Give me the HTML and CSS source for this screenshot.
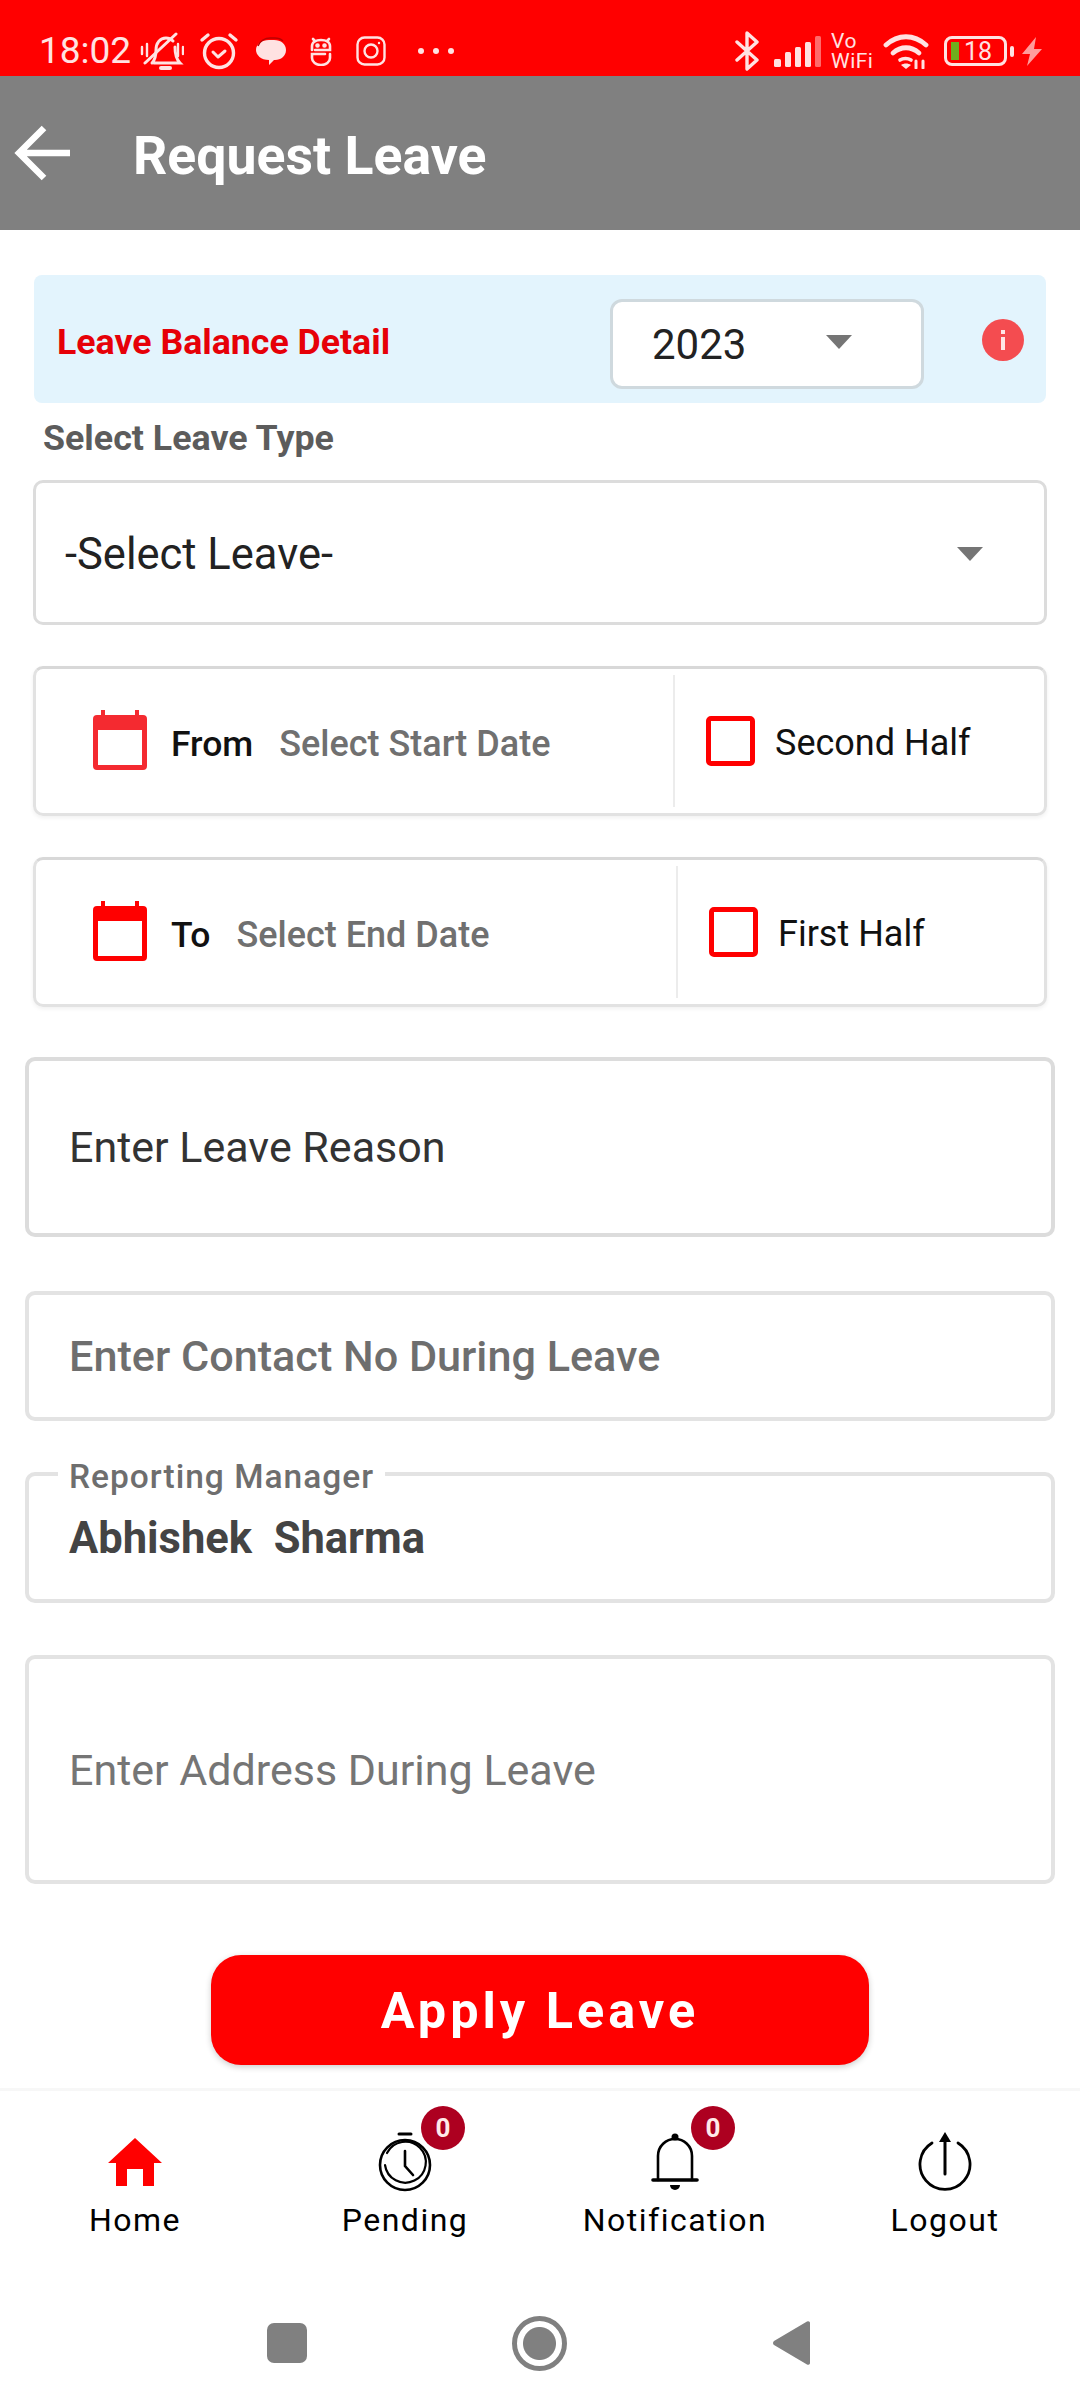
FILE: index.html
```html
<!DOCTYPE html>
<html>
    <head>
        <title>Request Leave</title>
        <meta name="viewport" content="width=device-width, initial-scale=1.0">
        <link rel="stylesheet" href="styles.css">
    </head>
    <body>
        <div class="status-bar">
            <span class="time">18:02</span>
            <svg class="ic-mute" viewBox="0 0 44 38" fill="none" stroke="#ffe2e2" stroke-width="3" stroke-linecap="round">
                <path d="M12 31c3-3 4-7 4-13 0-7 4-12 10-12 3 0 5 1 7 3M35 15c0 7 1 12 5 16H14"/>
                <path d="M5 31 36 2"/>
                <path d="M2 15v7M7 12v12M38 12v12M43 15v7" stroke-width="2.4"/>
                <path d="M21 36h9" stroke-width="4"/>
            </svg>
            <svg class="ic-alarm" viewBox="0 0 40 38" fill="none" stroke="#ffe2e2" stroke-width="3.4" stroke-linecap="round" stroke-linejoin="round">
                <circle cx="20" cy="21" r="14.5"/>
                <path d="M3 8l6-5M37 8l-6-5"/>
                <path d="M14 20l5 5 7-6" stroke-width="3"/>
            </svg>
            <svg class="ic-chat" viewBox="0 0 30 28">
                <path d="M13 3h5c7 0 12 4 12 10s-5 10-11 10h-1l-5 5v-5C5 23 0 18 0 13 0 7 6 3 13 3z" fill="#ffe2e2"/>
                <path d="M2 9c2-5 7-8 12-8h5c3 0 6 1 8 3" fill="none" stroke="#b00" stroke-width="1.4"/>
            </svg>
            <svg class="ic-robot" viewBox="0 0 22 30" fill="none" stroke="#ffe2e2" stroke-width="2.6" stroke-linecap="round">
                <path d="M2 14V10c0-4 4-6 9-6s9 2 9 6v4H5M20 18v4c0 4-4 7-9 7s-9-3-9-7v-4h13"/>
                <path d="M3 3l2 2M19 3l-2 2"/>
                <circle cx="7.5" cy="9.500" r="1" fill="#ffe2e2"/>
                <circle cx="14.5" cy="9.500" r="1" fill="#ffe2e2"/>
            </svg>
            <svg class="ic-insta" viewBox="0 0 30 30" fill="none" stroke="#ffe2e2" stroke-width="2.4">
                <rect x="1.5" y="1.5" width="27" height="27" rx="7"/>
                <circle cx="15" cy="15" r="6.5"/>
                <circle cx="23" cy="7" r="1.2" fill="#ffe2e2" stroke="none"/>
            </svg>
            <div class="status-dots"><i></i><i></i><i></i></div>

            <svg class="ic-bt" viewBox="0 0 24 40" fill="none" stroke="#ffe2e2" stroke-width="3.4" stroke-linecap="round" stroke-linejoin="round">
                <path d="M2 11l20 18-10 9V2l10 9L2 29"/>
            </svg>
            <svg class="ic-signal" viewBox="0 0 47 31">
                <rect x="0" y="23" width="7" height="8" rx="1.5" fill="#ffe2e2"/>
                <rect x="11" y="16" width="6" height="15" rx="1.5" fill="#ffe2e2"/>
                <rect x="21" y="11" width="6" height="20" rx="1.5" fill="#ffe2e2"/>
                <rect x="31" y="6" width="6" height="25" rx="1.5" fill="#ffe2e2"/>
                <rect x="41" y="0" width="6" height="31" rx="1.5" fill="#ff6a6a"/>
            </svg>
            <div class="vowifi"><span>Vo</span><span>WiFi</span></div>
            <svg class="ic-wifi" viewBox="0 0 46 36" fill="none" stroke="#ffe2e2" stroke-width="4.8" stroke-linecap="round">
                <path d="M3 12c12-11 28-11 40 0"/>
                <path d="M10 20c8-7 18-7 26 0"/>
                <path d="M17 27c3-2 8-2 11 0" stroke-width="3.6"/>
                <path d="M23 36l-5-4c3-2 7-2 10 0z" fill="#ffe2e2" stroke="none"/>
                <path d="M33 28v7M40 28v7" stroke-width="3"/>
            </svg>
            <div class="battery">
                <div class="battery-body"><i></i><span>18</span></div>
                <div class="battery-nub"></div>
            </div>
            <svg class="ic-bolt" viewBox="0 0 20 29">
                <path d="M14 0 0 17h8l-3 12 15-17h-8z" fill="#ff9c9c"/>
            </svg>
        </div>

        <header class="app-bar">
            <svg class="back-arrow" viewBox="0 0 56 56" fill="none" stroke="#fff" stroke-width="6.5">
                <path d="M56 28H5M30 3 5 28l25 25"/>
            </svg>
            <h1>Request Leave</h1>
        </header>

        <main class="form">
            <div class="balance">
                <span class="balance-title">Leave Balance Detail</span>
                <div class="year-select">
                    <span>2023</span>
                    <i class="caret"></i>
                </div>
                <svg class="info-icon" viewBox="0 0 42 42">
                    <circle cx="21" cy="21" r="21" fill="#f44c50"/>
                    <rect x="19" y="11" width="4" height="4" fill="#ffe6e6"/>
                    <rect x="19" y="18" width="4" height="13" fill="#ffe6e6"/>
                </svg>
            </div>

            <div class="field-label">Select Leave Type</div>
            <div class="leave-select">
                <span>-Select Leave-</span>
                <i class="caret"></i>
            </div>

            <div class="date-row">
                <div class="date-main">
                    <svg class="calendar" viewBox="0 0 54 60">
                        <path d="M8 0h4v6H8zM42 0h4v6h-4z" fill="#f42a30"/>
                        <path d="M4 5h46a4 4 0 0 1 4 4v47a4 4 0 0 1-4 4H4a4 4 0 0 1-4-4V9a4 4 0 0 1 4-4zM5 20v35h44V20z" fill="#f42a30" fill-rule="evenodd"/>
                    </svg>
                    <span class="date-name">From</span>
                    <span class="date-hint">Select Start Date</span>
                </div>
                <div class="date-half">
                    <i class="check"></i>
                    <span>Second Half</span>
                </div>
            </div>

            <div class="date-row date-row-to">
                <div class="date-main">
                    <svg class="calendar" viewBox="0 0 54 60">
                        <path d="M8 0h4v6H8zM42 0h4v6h-4z" fill="#f00"/>
                        <path d="M4 5h46a4 4 0 0 1 4 4v47a4 4 0 0 1-4 4H4a4 4 0 0 1-4-4V9a4 4 0 0 1 4-4zM5 20v35h44V20z" fill="#f00" fill-rule="evenodd"/>
                    </svg>
                    <span class="date-name">To</span>
                    <span class="date-hint">Select End Date</span>
                </div>
                <div class="date-half">
                    <i class="check"></i>
                    <span>First Half</span>
                </div>
            </div>

            <div class="input-box reason">Enter Leave Reason</div>
            <div class="input-box contact">Enter Contact No During Leave</div>
            <div class="input-box manager">
                <span class="legend">Reporting Manager</span>
                Abhishek&nbsp; Sharma
            </div>
            <div class="input-box address">Enter Address During Leave</div>

            <div class="apply-wrap">
                <button class="apply-btn">Apply Leave</button>
            </div>
        </main>

        <nav class="bottom-nav">
            <div class="nav-item">
                <div class="nav-icon">
                    <svg class="ic-home" viewBox="0 0 54 48">
                        <path d="M27 0 54 25H46V48H35V31H19V48H8V25H0z" fill="#f00"/>
                    </svg>
                </div>
                <span>Home</span>
            </div>
            <div class="nav-item">
                <div class="nav-icon">
                    <svg class="ic-nav" viewBox="0 0 54 60" fill="none" stroke="#000" stroke-linecap="round">
                        <path d="M21 2h12" stroke-width="3"/>
                        <circle cx="27" cy="33" r="25" stroke-width="2.6"/>
                        <path d="M9 21A20.500 20.500 0 1 1 7 33" stroke-width="2.2"/>
                        <path d="M27 19v15l8 9" stroke-width="2.6"/>
                    </svg>
                    <span class="badge">0</span>
                </div>
                <span>Pending</span>
            </div>
            <div class="nav-item">
                <div class="nav-icon">
                    <svg class="ic-nav" viewBox="0 0 54 60" fill="none" stroke="#000" stroke-linecap="round">
                        <circle cx="27" cy="5" r="3.500" fill="#000" stroke="none"/>
                        <path d="M10 48V24C10 14 18 7 27 7s17 7 17 17v24" stroke-width="2.6"/>
                        <path d="M5 48h44" stroke-width="3.600"/>
                        <path d="M22 53h10a5 5 0 0 1-10 0z" fill="#000" stroke="none"/>
                    </svg>
                    <span class="badge">0</span>
                </div>
                <span>Notification</span>
            </div>
            <div class="nav-item">
                <div class="nav-icon">
                    <svg class="ic-nav" viewBox="0 0 54 60" fill="none" stroke="#000" stroke-linecap="round">
                        <path d="M14 11A25 25 0 1 0 40 11" stroke-width="2.800"/>
                        <path d="M27 42V8" stroke-width="3"/>
                        <path d="M27 0l6 10H21z" fill="#000" stroke="none"/>
                    </svg>
                </div>
                <span>Logout</span>
            </div>
        </nav>

        <div class="system-nav">
            <i class="sys-square"></i>
            <i class="sys-circle"></i>
            <svg class="sys-back" viewBox="0 0 38 46">
                <path d="M35 1.500a2 2 0 0 1 3 2v39a2 2 0 0 1-3 2L2 25a2.500 2.500 0 0 1 0-4z" fill="#808080"/>
            </svg>
        </div>
    </body>
</html>
```

FILE: styles.css
```css
* {
    box-sizing: border-box;
}

body {
    margin: 0;
    width: 1080px;
    height: 2408px;
    background-color: #fff;
    font-family: Roboto, "Noto Sans", sans-serif;
    display: flex;
    flex-direction: column;
    overflow: hidden;
}

i {
    display: block;
}

/* status bar */
.status-bar {
    height: 76px;
    background-color: #f00;
    color: #ffe2e2;
    display: flex;
    align-items: center;
    padding: 26px 38px 0 39px;
}

.status-bar svg {
    flex: none;
    display: block;
}

.time {
    font-size: 37px;
    width: 91px;
    line-height: 50px;
}

.ic-mute { width: 44px; height: 38px; margin-left: 10px; }
.ic-alarm { width: 40px; height: 38px; margin-left: 15px; }
.ic-chat { width: 30px; height: 28px; margin-left: 17px; }
.ic-robot { width: 22px; height: 30px; margin-left: 24px; }
.ic-insta { width: 30px; height: 30px; margin-left: 24px; }

.status-dots {
    display: flex;
    gap: 9px;
    margin-left: 32px;
}

.status-dots i {
    width: 6px;
    height: 6px;
    border-radius: 50%;
    background-color: #ffe2e2;
}

.ic-bt { width: 24px; height: 40px; margin-left: auto; }
.ic-signal { width: 47px; height: 31px; margin-left: 15px; }

.vowifi {
    width: 42px;
    margin-left: 10px;
    display: flex;
    flex-direction: column;
    font-size: 21px;
    line-height: 20px;
    letter-spacing: 0.5px;
}

.ic-wifi { width: 46px; height: 36px; margin-left: 10px; }

.battery {
    display: flex;
    align-items: center;
    margin-left: 15px;
}

.battery-body {
    width: 63px;
    height: 30px;
    border: 3px solid #ffe2e2;
    border-radius: 8px;
    display: flex;
    align-items: center;
    padding-left: 4px;
    font-size: 25px;
}

.battery-body i {
    width: 8px;
    height: 18px;
    background-color: #6fae1e;
    margin-right: 5px;
}

.battery-nub {
    width: 4px;
    height: 11px;
    margin-left: 3px;
    border-radius: 2px;
    background-color: #ffe2e2;
}

.ic-bolt { width: 20px; height: 29px; margin-left: 8px; }

/* app bar */
.app-bar {
    height: 154px;
    background-color: #808080;
    display: flex;
    align-items: center;
    padding-left: 14px;
}

.back-arrow {
    width: 56px;
    height: 56px;
}

.app-bar h1 {
    margin: 5px 0 0 63px;
    color: #fff;
    font-size: 53.6px;
    font-weight: 700;
}

/* form */
.form {
    flex: 1;
    padding: 45px 25px 0;
}

.balance {
    height: 128px;
    margin: 0 9px;
    background-color: #e3f4fd;
    border-radius: 8px;
    display: flex;
    align-items: center;
    padding-left: 23px;
}

.balance-title {
    width: 553px;
    margin-top: 6px;
    color: #e60008;
    font-size: 35.7px;
    font-weight: 700;
}

.year-select {
    width: 314px;
    height: 90px;
    margin-top: 10px;
    background-color: #fff;
    border: 3px solid #cfd9de;
    border-radius: 12px;
    display: flex;
    align-items: center;
    justify-content: space-between;
    padding: 0 69px 0 39px;
    font-size: 42px;
    color: #222;
}

.caret {
    width: 0;
    height: 0;
    border-left: 13px solid transparent;
    border-right: 13px solid transparent;
    border-top: 14px solid #757575;
}

.year-select .caret {
    margin-top: -4px;
}

.info-icon {
    width: 42px;
    height: 42px;
    margin: 1px 0 0 58px;
}

.field-label {
    height: 70px;
    margin-bottom: 7px;
    padding-left: 9px;
    margin-left: 9px;
    line-height: 70px;
    color: #5c5c5c;
    font-size: 35.8px;
    font-weight: 700;
}

.leave-select {
    height: 145px;
    margin: 0 8px;
    border: 3px solid #dcdcdc;
    border-radius: 10px;
    display: flex;
    align-items: center;
    justify-content: space-between;
    padding: 3px 61px 0 29px;
    font-size: 43.5px;
    color: #222;
}

.date-row {
    height: 150px;
    margin: 41px 8px 0;
    border: 3px solid #e2e2e2;
    border-top-color: #d8d8d8;
    border-radius: 10px;
    box-shadow: 0 2px 4px rgba(0, 0, 0, 0.06);
    display: flex;
}

.date-row-to .date-half {
    width: 368px;
}

.date-main {
    flex: 1;
    display: flex;
    align-items: center;
    padding-left: 57px;
    margin-top: 2px;
}

.calendar {
    width: 54px;
    height: 60px;
    flex: none;
    margin-top: -4px;
}

.date-name {
    margin-left: 24px;
    margin-top: 4px;
    font-size: 35.5px;
    font-weight: 500;
    color: #111;
}

.date-hint {
    margin-left: 26px;
    margin-top: 4px;
    font-size: 36px;
    font-weight: 500;
    color: #707070;
}

.date-half {
    width: 371px;
    margin: 6px 0;
    border-left: 2px solid #ececec;
    display: flex;
    align-items: center;
    padding: 4px 0 0 31px;
    font-size: 36px;
    color: #111;
}

.check {
    width: 49px;
    height: 50px;
    flex: none;
    margin: -4px 20px 0 0;
    border: 5px solid #f00;
    border-radius: 5px;
}

.input-box {
    position: relative;
    border: 4px solid #e3e3e3;
    border-radius: 10px;
    display: flex;
    align-items: center;
    padding-left: 40px;
    font-size: 43px;
}

.reason {
    height: 180px;
    margin-top: 50px;
    border-color: #dcdcdc;
    color: #333;
}

.contact {
    height: 130px;
    margin-top: 54px;
    color: #6e6e6e;
    font-weight: 500;
    font-size: 43.2px;
}

.manager {
    height: 131px;
    margin-top: 51px;
    padding-top: 2px;
    color: #444;
    font-weight: 700;
    font-size: 43.5px;
}

.legend {
    position: absolute;
    top: -19px;
    left: 29px;
    padding: 0 11px;
    background-color: #fff;
    color: #6e6e6e;
    font-size: 33.5px;
    font-weight: 500;
    letter-spacing: 1px;
    line-height: 40px;
}

.address {
    height: 229px;
    margin-top: 52px;
    color: #757575;
}

.apply-wrap {
    display: flex;
    justify-content: center;
    margin-top: 71px;
}

.apply-btn {
    width: 658px;
    height: 110px;
    background-color: #f00;
    color: #fff;
    border: none;
    border-radius: 30px;
    box-shadow: 0 2px 6px rgba(0, 0, 0, 0.2);
    font-family: inherit;
    font-size: 50.4px;
    font-weight: 700;
    letter-spacing: 4px;
}

/* bottom nav */
.bottom-nav {
    height: 190px;
    flex: none;
    border-top: 3px solid #f7f7f7;
    display: grid;
    grid-template-columns: repeat(4, 1fr);
}

.nav-item {
    display: flex;
    flex-direction: column;
    align-items: center;
    padding-top: 41px;
    font-size: 32px;
    letter-spacing: 1.5px;
    color: #000;
}

.nav-icon {
    position: relative;
    width: 54px;
    height: 60px;
    margin-bottom: 9px;
    display: flex;
    align-items: flex-end;
}

.ic-nav {
    width: 54px;
    height: 60px;
}

.ic-home {
    width: 54px;
    height: 48px;
    margin-bottom: 6px;
}

.badge {
    position: absolute;
    top: -26px;
    left: 43px;
    width: 44px;
    height: 44px;
    border-radius: 50%;
    background-color: #ad0020;
    color: #ffe9e9;
    font-size: 26px;
    font-weight: 700;
    letter-spacing: 0;
    line-height: 44px;
    text-align: center;
}

/* android nav */
.system-nav {
    height: 130px;
    flex: none;
    display: flex;
    align-items: center;
    padding-left: 267px;
}

.sys-square {
    width: 40px;
    height: 40px;
    border-radius: 7px;
    background-color: #808080;
}

.sys-circle {
    width: 55px;
    height: 55px;
    margin-left: 205px;
    border-radius: 50%;
    border: 5px solid #808080;
    background: radial-gradient(circle, #808080 0 16px, #fff 17px);
}

.sys-back {
    width: 38px;
    height: 46px;
    margin-left: 205px;
}
```
